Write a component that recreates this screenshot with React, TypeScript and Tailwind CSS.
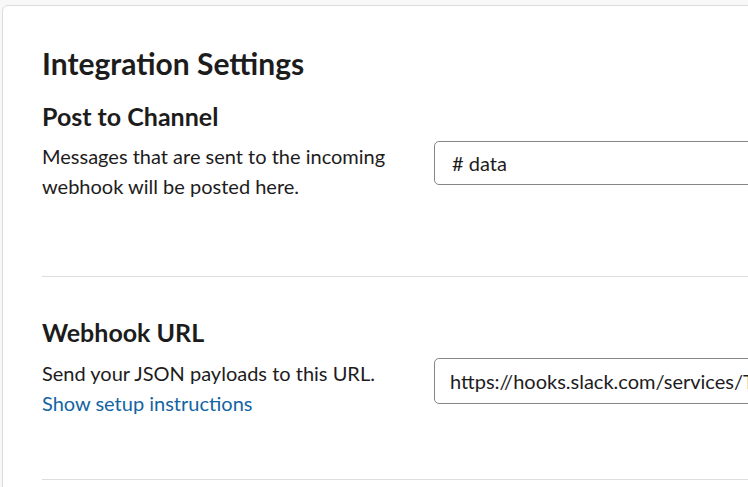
export default function App() {
  return (
    <div className="h-screen w-screen overflow-hidden bg-[#f8f8f8] pt-[5px] pl-[2px] font-['Lato',sans-serif] text-[#1d1c1d]">
      <div className="w-[1000px] min-h-[600px] rounded-tl-[6px] border border-[#dddddd] bg-white pl-[39px]">
        <h1 className="mt-[37px] text-[30px] font-bold leading-[40px]">Integration Settings</h1>

        <section className="flex pb-[75px] pt-[17px]">
          <div className="w-[392px] shrink-0">
            <h2 className="text-[25px] font-bold leading-[32px]">Post to Channel</h2>
            <p className="mt-[9px] w-[360px] text-[20px] leading-[30px]">
              Messages that are sent to the incoming webhook will be posted here.
            </p>
          </div>
          <div className="pt-[41px]">
            <div className="flex h-[44px] w-[500px] items-center rounded-[5px] border border-[#868686] px-[17px] text-[20px]">
              # data
            </div>
          </div>
        </section>

        <div className="h-px bg-[#dddddd]" />

        <section className="flex pb-[61px] pt-[39px]">
          <div className="w-[392px] shrink-0">
            <h2 className="text-[25px] font-bold leading-[32px]">Webhook URL</h2>
            <p className="mt-[10px] text-[20px] leading-[30px]">Send your JSON payloads to this URL.</p>
            <a href="#" className="block text-[20px] leading-[30px] text-[#1264a3]">
              Show setup instructions
            </a>
          </div>
          <div className="pt-[42px]">
            <div className="flex h-[46px] w-[500px] items-center overflow-hidden whitespace-nowrap rounded-[5px] border border-[#868686] px-[15px] text-[20px]">
              https://hooks.slack.com/services/T00000000/B00000000/XXXXXXXXXXXX
            </div>
          </div>
        </section>

        <div className="h-px bg-[#dddddd]" />
      </div>
    </div>
  );
}
